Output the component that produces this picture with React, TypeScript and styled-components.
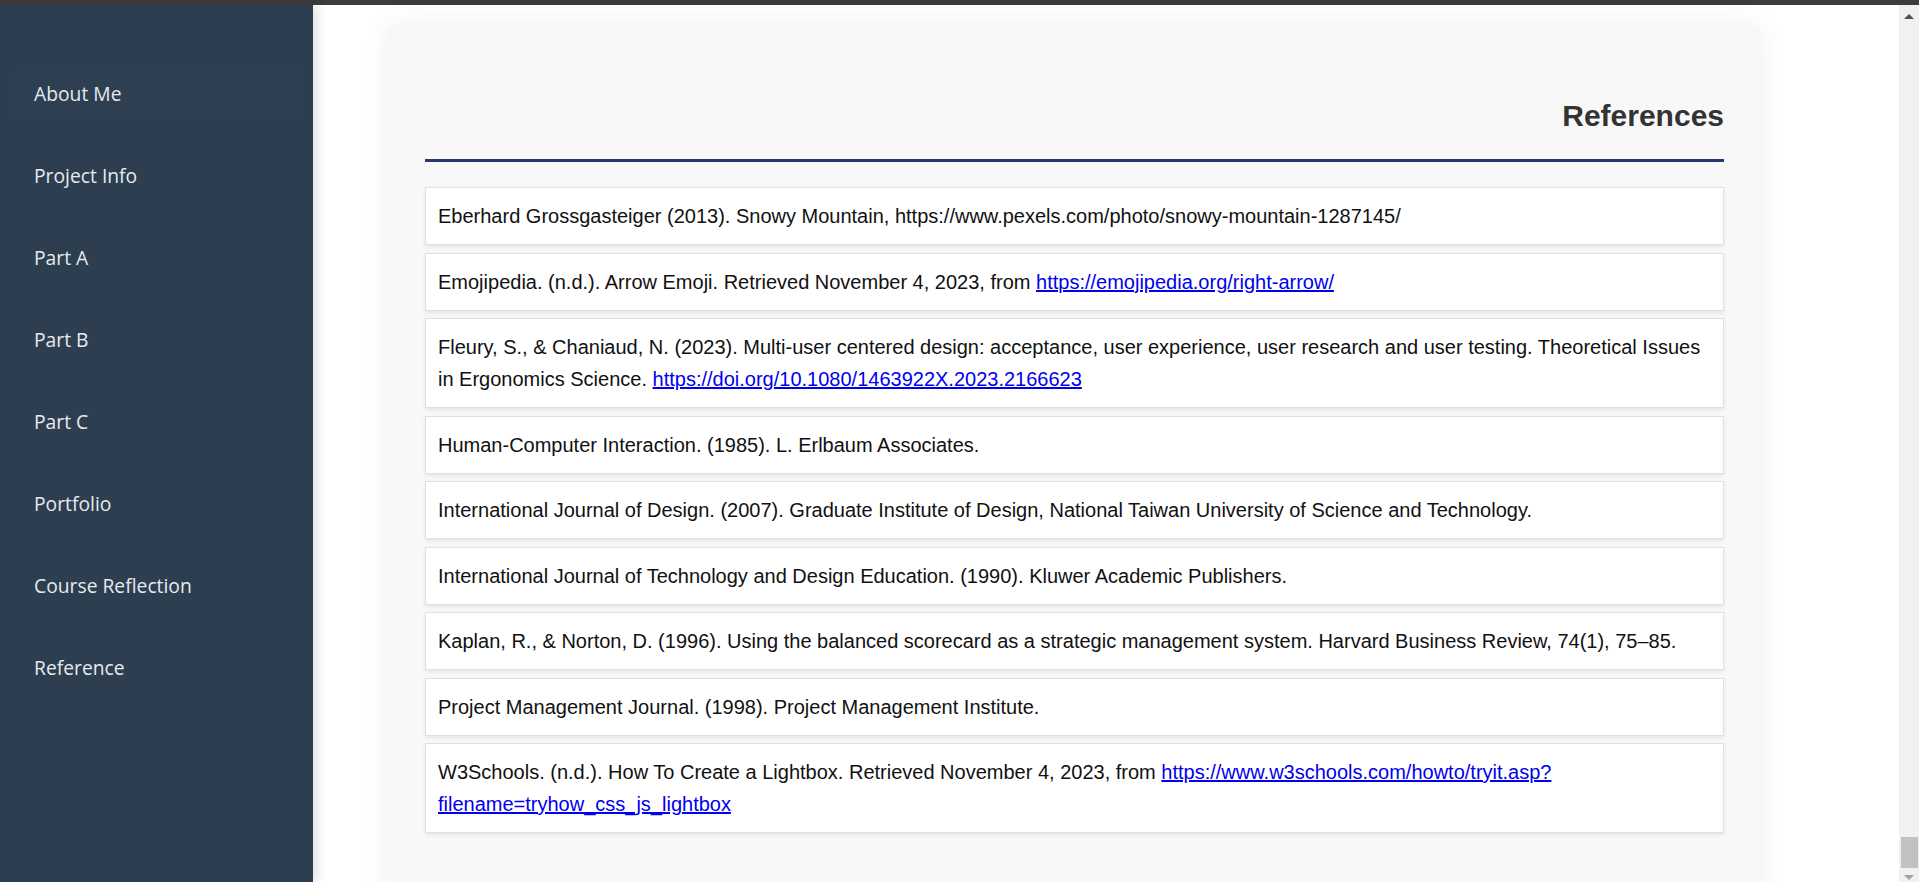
import React from "react";
import styled, { createGlobalStyle } from "styled-components";

interface RefItem {
  id: string
  text: string
  link?: string
}

const navItems = [
  "About Me",
  "Project Info",
  "Part A",
  "Part B",
  "Part C",
  "Portfolio",
  "Course Reflection",
  "Reference",
];

const references: RefItem[] = [
  {
    id: "0",
    text: "Eberhard Grossgasteiger (2013). Snowy Mountain, https://www.pexels.com/photo/snowy-mountain-1287145/",
  },
  {
    id: "1",
    text: "Emojipedia. (n.d.). Arrow Emoji. Retrieved November 4, 2023, from ",
    link: "https://emojipedia.org/right-arrow/",
  },
  {
    id: "2",
    text: "Fleury, S., & Chaniaud, N. (2023). Multi-user centered design: acceptance, user experience, user research and user testing. Theoretical Issues in Ergonomics Science. ",
    link: "https://doi.org/10.1080/1463922X.2023.2166623",
  },
  { id: "3", text: "Human-Computer Interaction. (1985). L. Erlbaum Associates." },
  {
    id: "4",
    text: "International Journal of Design. (2007). Graduate Institute of Design, National Taiwan University of Science and Technology.",
  },
  {
    id: "5",
    text: "International Journal of Technology and Design Education. (1990). Kluwer Academic Publishers.",
  },
  {
    id: "6",
    text: "Kaplan, R., & Norton, D. (1996). Using the balanced scorecard as a strategic management system. Harvard Business Review, 74(1), 75–85.",
  },
  { id: "7", text: "Project Management Journal. (1998). Project Management Institute." },
  {
    id: "8",
    text: "W3Schools. (n.d.). How To Create a Lightbox. Retrieved November 4, 2023, from ",
    link: "https://www.w3schools.com/howto/tryit.asp?filename=tryhow_css_js_lightbox",
  },
];

const App: React.FC = (): React.ReactElement => {
  return (
    <>
      <GlobalStyle />
      <Page>
        <TopStrip />
        <Body>
          <Sidebar>
            {navItems.map((label, i) => (
              <NavLink key={label} href="#" $active={i === 0}>
                {label}
              </NavLink>
            ))}
          </Sidebar>
          <Main>
            <Card>
              <Heading>References</Heading>
              <RefList>
                {references.map((ref) => (
                  <RefEntry key={ref.id}>
                    {ref.text}
                    {ref.link && <RefLink href="#">{ref.link}</RefLink>}
                  </RefEntry>
                ))}
              </RefList>
            </Card>
          </Main>
          <ScrollTrack>
            <ArrowUp />
            <Thumb />
            <ArrowDown />
          </ScrollTrack>
        </Body>
      </Page>
    </>
  );
};

const GlobalStyle = createGlobalStyle`
  html, body {
    margin: 0;
    padding: 0;
    height: 100%;
    overflow: hidden;
    background: #ffffff;
  }
  * {
    box-sizing: border-box;
  }
`;

const Page = styled.div`
  display: flex;
  flex-direction: column;
  height: 100vh;
  overflow: hidden;
`;

const TopStrip = styled.div`
  height: 5px;
  flex-shrink: 0;
  background-color: #3c3c3c;
`;

const Body = styled.div`
  display: flex;
  flex: 1;
  min-height: 0;
`;

const Sidebar = styled.nav`
  display: flex;
  flex-direction: column;
  gap: 32px;
  width: 313px;
  flex-shrink: 0;
  padding-top: 64px;
  background-color: #2c3e50;
  box-shadow: 3px 0 12px rgba(0, 0, 0, 0.14);
  position: relative;
  z-index: 1;
`;

const NavLink = styled.a<{ $active?: boolean }>`
  display: block;
  height: 50px;
  margin: 0 15px;
  padding: 0 19px;
  line-height: 50px;
  border-radius: 4px;
  background-color: ${(p) => (p.$active ? "rgba(255, 255, 255, 0.006)" : "transparent")};
  color: #e6eaee;
  font-family: "Open Sans", "Noto Sans", sans-serif;
  font-size: 19.3px;
  text-decoration: none;
`;

const Main = styled.main`
  flex: 1;
  min-width: 0;
  overflow: hidden;
  padding: 19px 0 0 74px;
`;

const Card = styled.section`
  width: 1375px;
  min-height: 900px;
  padding: 74px 38px 60px;
  background-color: #f8f8f8;
  border-radius: 12px;
  box-shadow: 0 0 28px rgba(0, 0, 0, 0.06);
`;

const Heading = styled.h2`
  margin: 0;
  padding-bottom: 25px;
  border-bottom: 3px solid #263a6b;
  text-align: right;
  color: #333333;
  font-family: "Liberation Sans", Arial, sans-serif;
  font-size: 30px;
  font-weight: 700;
  line-height: 36px;
`;

const RefList = styled.div`
  display: flex;
  flex-direction: column;
  gap: 7.5px;
  margin-top: 25px;
`;

const RefEntry = styled.div`
  padding: 12px;
  background-color: #ffffff;
  border: 1px solid #e0e0e0;
  box-shadow: 0 2px 4px rgba(0, 0, 0, 0.08);
  color: #111111;
  font-family: "Liberation Sans", Arial, sans-serif;
  font-size: 20px;
  line-height: 32px;
`;

const RefLink = styled.a`
  color: #0000ee;
  text-decoration: underline;
`;

const ScrollTrack = styled.div`
  display: flex;
  flex-direction: column;
  align-items: center;
  width: 20px;
  flex-shrink: 0;
  background-color: #f1f1f1;
`;

const ArrowUp = styled.div`
  margin-top: 9px;
  width: 0;
  height: 0;
  border-left: 5px solid transparent;
  border-right: 5px solid transparent;
  border-bottom: 5px solid #505050;
`;

const Thumb = styled.div`
  margin-top: auto;
  width: 17px;
  height: 31px;
  background-color: #c1c1c1;
`;

const ArrowDown = styled.div`
  margin: 7px 0 2px;
  width: 0;
  height: 0;
  border-left: 5px solid transparent;
  border-right: 5px solid transparent;
  border-top: 5px solid #a3a3a3;
`;

export default App;
